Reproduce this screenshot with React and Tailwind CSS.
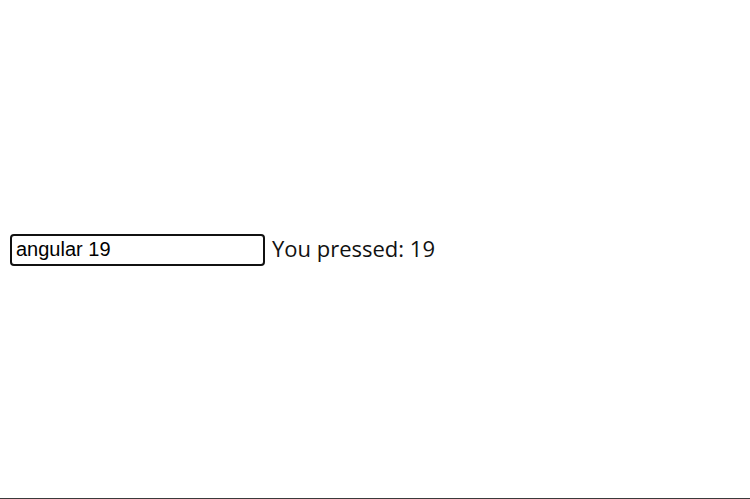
export default function App() {
  return (
    <div className="h-[499px] w-[750px] bg-white flex flex-col">
      <div className="flex-1 flex items-center pl-[10px] pt-[2px]">
        <input
          type="text"
          defaultValue="angular 19"
          className="w-[255px] h-[32px] border-2 border-[#111] rounded-[4px] pl-[4px] pr-[5px] pb-[2px] text-[20px] text-black outline-none"
          style={{ fontFamily: '"Liberation Sans", Arial, sans-serif' }}
        />
        <span
          className="ml-[7px] text-[22px] leading-none text-[#111] -mt-[5px]"
          style={{ fontFamily: '"Open Sans", sans-serif' }}
        >
          You pressed: 19
        </span>
      </div>
      <div className="h-[1px] bg-[#3a3a3a]" />
    </div>
  );
}
